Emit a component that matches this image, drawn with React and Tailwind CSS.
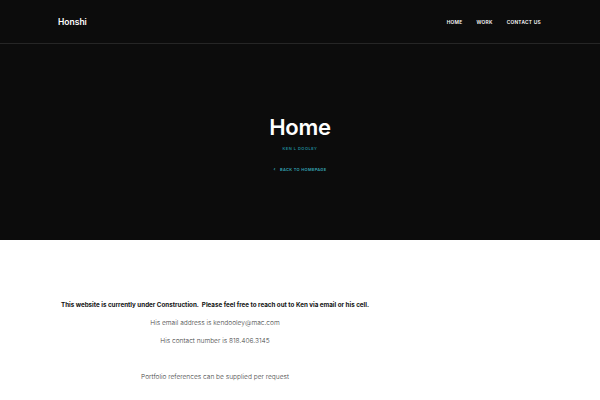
import React from "react";

const App = () => {
  return (
    <div className="w-[600px] min-h-[400px] bg-white font-['Inter',sans-serif]">
      <div className="bg-[#0c0c0c] h-[240px] flex flex-col">
        <div className="h-[44px] border-b border-[#262626] flex items-center justify-between pl-[58px] pr-[59px]">
          <span className="text-white text-[8.5px] font-semibold pt-[1px]">Honshi</span>
          <nav className="flex gap-[14px] text-white text-[4.8px] font-semibold tracking-[0.06em] pt-[2px]">
            <span>HOME</span>
            <span>WORK</span>
            <span>CONTACT US</span>
          </nav>
        </div>
        <div className="flex flex-col items-center pt-[72px]">
          <h1 className="text-white text-[22px] font-semibold leading-none tracking-[-0.01em]">Home</h1>
          <div className="mt-[8px] text-[#1f8a9a] text-[4px] font-semibold tracking-[0.12em]">KEN L DOOLEY</div>
          <div className="mt-[14px] text-[#35a5b5] text-[4px] font-semibold tracking-[0.08em] flex items-center gap-[4px]">
            <span className="text-[5px]">‹</span>
            <span>BACK TO HOMEPAGE</span>
          </div>
        </div>
      </div>
      <div className="w-[430px] pt-[61px] flex flex-col items-center text-[6.25px] text-[#333]">
        <p className="font-bold text-[#111]">This website is currently under Construction.&nbsp; Please feel free to reach out to Ken via email or his cell.</p>
        <p className="mt-[9px] font-light text-[#444] text-[6.6px]">His email address is kendooley@mac.com</p>
        <p className="mt-[8px] font-light text-[#444] text-[6.6px]">His contact number is 818.406.3145</p>
        <p className="mt-[26px] font-light text-[#444] text-[6.6px]">Portfolio references can be supplied per request</p>
      </div>
    </div>
  );
};

export default App;
